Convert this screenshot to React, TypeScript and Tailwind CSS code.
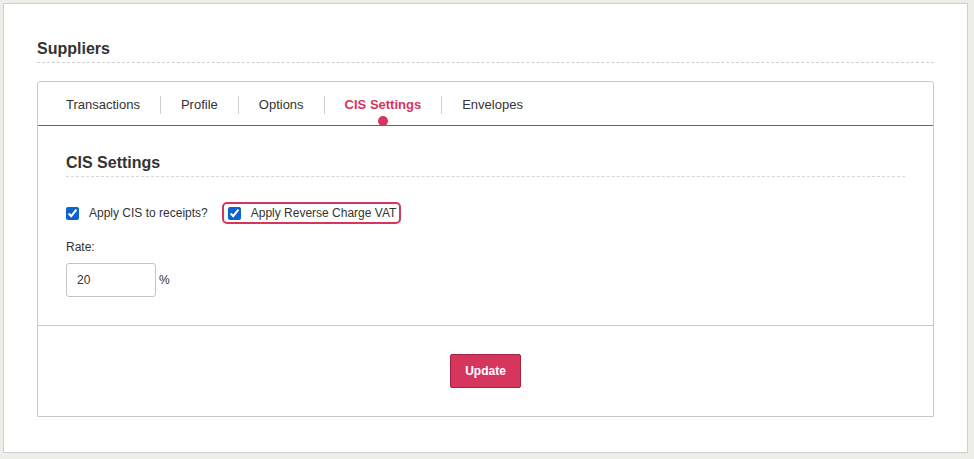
import React from 'react'

const tabs = ['Transactions', 'Profile', 'Options', 'CIS Settings', 'Envelopes']

export default function App() {
  return (
    <div className="w-[974px] h-[459px] bg-[#eeeee8] p-[3px] font-['Liberation_Sans',Arial,sans-serif] text-[#333]">
      <div className="h-[450px] w-[965px] bg-white border border-[#d0d0d0] px-[33px] pt-[35px]">
        <h1 className="text-[16px] font-bold text-[#333] leading-[20px] pb-[3px] border-b border-dashed border-[#cfcfcf]">
          Suppliers
        </h1>

        <div className="mt-[18px] border border-[#c8c8c8] rounded-t-[3px]">
          {/* tab strip */}
          <div className="relative h-[44px] border-b border-[#c8385a] flex items-center pl-[28px] pt-[2px]">
            {tabs.map((t, i) => (
              <div key={t} className="flex items-center">
                {i > 0 && <div className="w-px h-[18px] bg-[#cfcfcf]" />}
                <div
                  className={`relative text-[13px] leading-[16px] ${i === 0 ? 'pr-[20px]' : 'px-[20px]'} ${
                    t === 'CIS Settings' ? 'text-[#d6365e] font-bold' : 'text-[#333]'
                  }`}
                >
                  {t}
                  {t === 'CIS Settings' && (
                    <span className="absolute left-1/2 -translate-x-1/2 top-[19px] w-[10px] h-[10px] rounded-full bg-[#d6365e]" />
                  )}
                </div>
              </div>
            ))}
          </div>

          {/* body */}
          <div className="px-[28px] pt-[27px] pb-[28px]">
            <h2 className="text-[16px] font-bold leading-[20px] pb-[3px] border-b border-dashed border-[#d6d6d6]">
              CIS Settings
            </h2>

            <div className="flex items-center mt-[25px] text-[12px]">
              <label className="flex items-center gap-[10px] h-[22px]">
                <input type="checkbox" defaultChecked className="w-[13px] h-[13px] m-0 accent-[#0b63ce]" />
                Apply CIS to receipts?
              </label>
              <label className="flex items-center gap-[10px] ml-[14px] h-[22px] pl-[4px] pr-[3px] border-2 border-[#d6365e] rounded-[5px]">
                <input type="checkbox" defaultChecked className="w-[13px] h-[13px] m-0 accent-[#0b63ce]" />
                Apply Reverse Charge VAT
              </label>
            </div>

            <div className="mt-[16px] text-[12px] leading-[14px]">Rate:</div>
            <div className="flex items-center mt-[9px] text-[12px]">
              <input
                type="text"
                defaultValue="20"
                className="w-[90px] h-[34px] border border-[#c4c4c4] rounded-[3px] px-[10px] text-[12px] text-[#333] outline-none"
              />
              <span className="ml-[3px]">%</span>
            </div>
          </div>

          <div className="border-t border-[#c8c8c8] h-[91px] flex justify-center pt-[28px]">
            <button className="h-[34px] w-[71px] bg-[#d6365e] border border-[#a8223f] rounded-[2px] text-white text-[12px] font-bold">
              Update
            </button>
          </div>
        </div>
      </div>
    </div>
  )
}
